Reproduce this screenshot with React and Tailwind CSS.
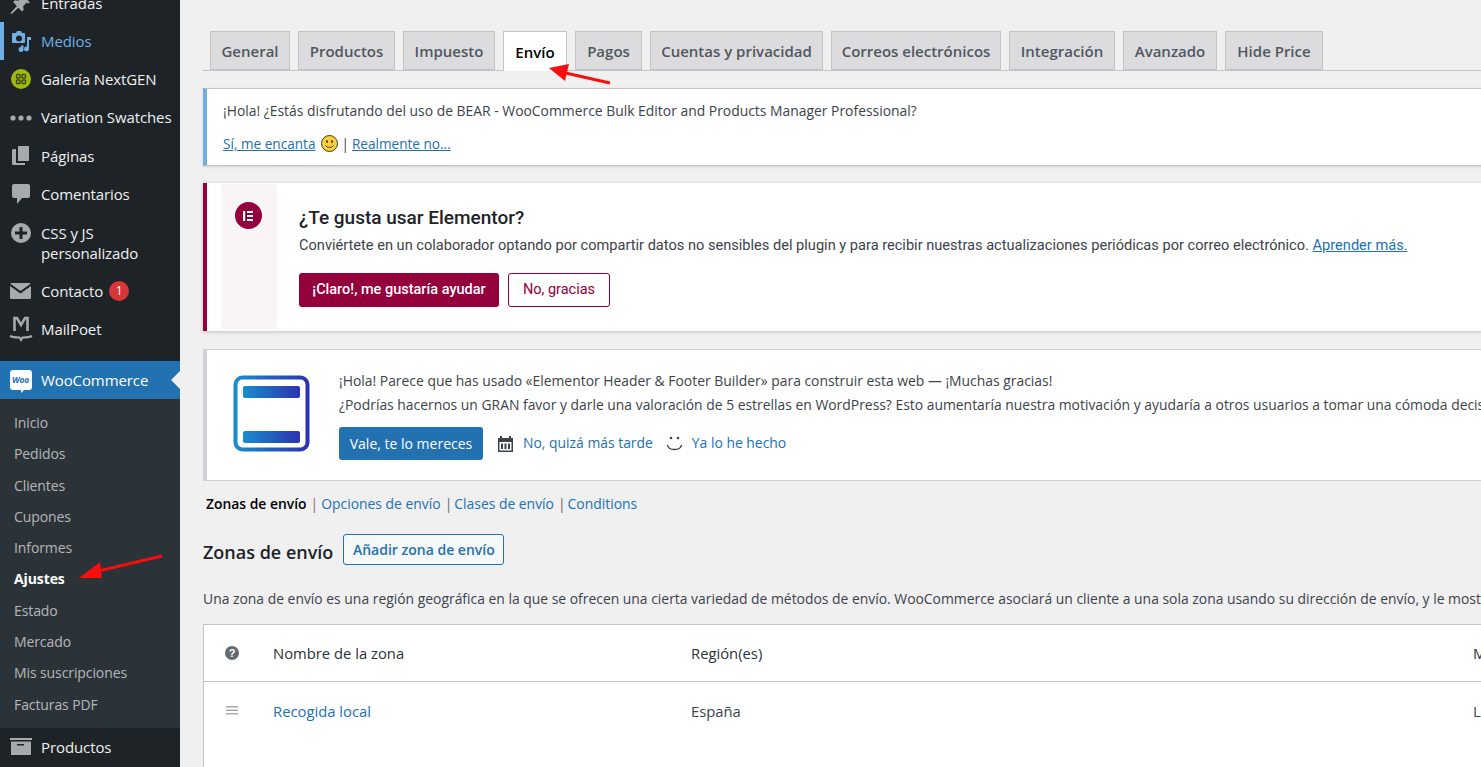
import React from 'react'

function PinIcon() {
    return (
        <svg width="21" height="21" viewBox="0 0 20 20" fill="#a7aaad">
            <path d="M11 1l8 8-2 1-1-1-3.500 3.500.5 3.500-1.500 1.500-3.500-3.500-6.500 6-1-1 6-6.500L3 8.500 4.500 7 8 7.500 11.500 4l-1-1z" />
        </svg>
    )
}

function MediaIcon() {
    return (
        <svg width="22" height="22" viewBox="0 0 22 22" fill="#72aee6">
            <path d="M3 3h3l1-2h4l1 2h2a1 1 0 0 1 1 1v8a1 1 0 0 1-1 1H3a1 1 0 0 1-1-1V4a1 1 0 0 1 1-1zm6 2.500a3 3 0 1 0 0 6 3 3 0 0 0 0-6z" fillRule="evenodd" />
            <path d="M17 7h4v3h-2v9a2.500 2.500 0 1 1-2-2.400zM11 15.500h2.500V19a2.500 2.500 0 1 1-2.500-2z" />
        </svg>
    )
}

function GalleryIcon() {
    return (
        <svg width="20" height="20" viewBox="0 0 20 20">
            <circle cx="10" cy="10" r="10" fill="#9fb80f" />
            <g fill="none" stroke="#3f4a0c" strokeWidth="1.400">
                <rect x="5.500" y="5.500" width="3.500" height="3.500" rx="0.800" />
                <rect x="11" y="5.500" width="3.500" height="3.500" rx="0.800" />
                <rect x="5.500" y="11" width="3.500" height="3.500" rx="0.800" />
                <rect x="11" y="11" width="3.500" height="3.500" rx="0.800" />
            </g>
        </svg>
    )
}

function DotsIcon() {
    return (
        <svg width="22" height="6" viewBox="0 0 22 6" fill="#a7aaad">
            <circle cx="3" cy="3" r="2.600" />
            <circle cx="11" cy="3" r="2.600" />
            <circle cx="19" cy="3" r="2.600" />
        </svg>
    )
}

function PagesIcon() {
    return (
        <svg width="18" height="20" viewBox="0 0 18 20" fill="#a7aaad">
            <path d="M6 0h11v15H6z" />
            <path d="M4 3v14h9v2H1.500A1.500 1.500 0 0 1 0 17.500V4.500A1.500 1.500 0 0 1 1.500 3z" />
        </svg>
    )
}

function CommentIcon() {
    return (
        <svg width="18" height="20" viewBox="0 0 18 20" fill="#a7aaad">
            <path d="M2 0h14a2 2 0 0 1 2 2v10a2 2 0 0 1-2 2H10l-5 6v-6H2a2 2 0 0 1-2-2V2a2 2 0 0 1 2-2z" />
        </svg>
    )
}

function PlusCircleIcon() {
    return (
        <svg width="20" height="20" viewBox="0 0 20 20" fill="#a7aaad">
            <path fillRule="evenodd" d="M10 0a10 10 0 1 1 0 20 10 10 0 0 1 0-20zM8.500 4v4.500H4v3h4.500V16h3v-4.500H16v-3h-4.500V4z" />
        </svg>
    )
}

function MailIcon() {
    return (
        <svg width="21" height="16" viewBox="0 0 21 16" fill="#a7aaad">
            <path d="M1.500 0h18c.6 0 1 .3 1.200.7L10.500 8 .3.700C.5.300.9 0 1.500 0z" />
            <path d="M0 3l10.500 7.500L21 3v11.500a1.500 1.500 0 0 1-1.500 1.500h-18A1.500 1.500 0 0 1 0 14.500z" />
        </svg>
    )
}

function MailPoetIcon() {
    return (
        <svg width="24" height="26" viewBox="0 0 24 26" fill="none" stroke="#a7aaad">
            <path d="M5.500 15V2h2.500l4 7 4-7h2.500v13" strokeWidth="2.600" />
            <path d="M1 20c3 1.500 7 1.500 9.500 1.500L12 24l1.500-2.500c2.500 0 6.500 0 9.500-1.500" strokeWidth="2" />
        </svg>
    )
}

function WooIcon() {
    return (
        <div className="relative flex h-[20px] w-[22px] items-center justify-center rounded-[3px] bg-white">
            <span className="text-[8.500px] font-bold italic leading-none tracking-tight text-[#2271b1]">Woo</span>
            <span className="absolute -bottom-[3px] left-[11px] h-0 w-0 border-r-[4px] border-t-[4px] border-r-transparent border-t-white" />
        </div>
    )
}

function ArchiveIcon() {
    return (
        <svg width="22" height="17" viewBox="0 0 22 17" fill="#a7aaad">
            <path d="M0 0h22v2H0z" />
            <path fillRule="evenodd" d="M1 3.500h20V17H1zM7 6v1.500h7V6z" />
        </svg>
    )
}

function SmileyIcon() {
    return (
        <svg width="17" height="17" viewBox="0 0 17 17">
            <circle cx="8.500" cy="8.500" r="8" fill="#fbcf3f" stroke="#4a3b10" strokeWidth="1" />
            <ellipse cx="6" cy="6.500" rx="1" ry="1.500" fill="#4a3b10" />
            <ellipse cx="11" cy="6.500" rx="1" ry="1.500" fill="#4a3b10" />
            <path d="M4.500 10.500c1.500 2.500 6.500 2.500 8 0" fill="none" stroke="#4a3b10" strokeWidth="1" />
        </svg>
    )
}

function Arrow({ className, width, height, x1, y1, x2, y2, head }) {
    return (
        <svg className={className} width={width} height={height} viewBox={`0 0 ${width} ${height}`}>
            <line x1={x1} y1={y1} x2={x2} y2={y2} stroke="#f50f0f" strokeWidth="3" />
            <polygon points={head} fill="#f50f0f" />
        </svg>
    )
}

const menuTop = [
    { label: 'Medios', icon: <MediaIcon />, active: true },
    { label: 'Galería NextGEN', icon: <GalleryIcon /> },
    { label: 'Variation Swatches', icon: <DotsIcon /> },
    { label: 'Páginas', icon: <PagesIcon /> },
    { label: 'Comentarios', icon: <CommentIcon /> },
]

const wooLinks = ['Inicio', 'Pedidos', 'Clientes', 'Cupones', 'Informes', 'Ajustes', 'Estado', 'Mercado', 'Mis suscripciones', 'Facturas PDF']

const tabs = [
    { label: 'General', w: 'w-[80px]' },
    { label: 'Productos', w: 'w-[97px]' },
    { label: 'Impuesto', w: 'w-[92px]' },
    { label: 'Envío', w: 'w-[64px]', active: true },
    { label: 'Pagos', w: 'w-[67px]' },
    { label: 'Cuentas y privacidad', w: 'w-[173px]' },
    { label: 'Correos electrónicos', w: 'w-[170px]' },
    { label: 'Integración', w: 'w-[106px]' },
    { label: 'Avanzado', w: 'w-[94px]' },
    { label: 'Hide Price', w: 'w-[98px]' },
]

function MenuItem({ label, icon, active }) {
    return (
        <div className={`flex h-[38.200px] items-center border-l-[4px] ${active ? 'border-[#72aee6] text-[#72aee6]' : 'border-transparent text-[#f0f0f1]'}`}>
            <div className="flex w-[37px] shrink-0 items-center justify-center pr-[4px]">{icon}</div>
            <span className="whitespace-nowrap text-[15px] tracking-[-0.100px]">{label}</span>
        </div>
    )
}

function Sidebar() {
    return (
        <aside className="h-full w-[180px] shrink-0 overflow-hidden bg-[#1d2327]">
            <div className="-mt-[16px]">
                <MenuItem label="Entradas" icon={<PinIcon />} />
                {menuTop.map((item) => (
                    <MenuItem key={item.label} {...item} />
                ))}
                <div className="mt-[1px] flex h-[58px] items-center border-l-[4px] border-transparent text-[#f0f0f1]">
                    <div className="flex w-[37px] shrink-0 items-center justify-center self-start pr-[4px] pt-[9px]">
                        <PlusCircleIcon />
                    </div>
                    <span className="text-[15px] leading-[20px] tracking-[-0.100px]">CSS y JS<br />personalizado</span>
                </div>
                <div className="flex h-[38px] items-center border-l-[4px] border-transparent text-[#f0f0f1]">
                    <div className="flex w-[37px] shrink-0 items-center justify-center pr-[4px]"><MailIcon /></div>
                    <span className="text-[15px] tracking-[-0.100px]">Contacto</span>
                    <span className="ml-[6px] flex h-[20px] w-[20px] items-center justify-center rounded-full bg-[#d63638] text-[12px] text-white">1</span>
                </div>
                <MenuItem label="MailPoet" icon={<MailPoetIcon />} />
                <div className="relative mt-[13px] flex h-[38px] items-center border-l-[4px] border-transparent bg-[#2271b1] text-white">
                    <div className="flex w-[37px] shrink-0 items-center justify-center pr-[4px]"><WooIcon /></div>
                    <span className="text-[15px] tracking-[-0.100px]">WooCommerce</span>
                    <span className="absolute right-0 top-[9.500px] h-0 w-0 border-y-[9px] border-r-[9px] border-y-transparent border-r-[#f0f0f1]" />
                </div>
                <div className="bg-[#2c3338] pb-[8px] pt-[7.500px]">
                    {wooLinks.map((link) => (
                        <div
                            key={link}
                            className={`flex h-[31.300px] items-center whitespace-nowrap pl-[14px] text-[14px] tracking-[-0.100px] ${link === 'Ajustes' ? 'font-bold text-white' : 'text-[#f0f0f1]/70'}`}
                        >
                            {link}
                        </div>
                    ))}
                </div>
                <MenuItem label="Productos" icon={<ArchiveIcon />} />
            </div>
        </aside>
    )
}

function TabBar() {
    return (
        <div className="flex h-[40px] gap-[8px] border-b border-[#c3c4c7] pl-[7px]">
            {tabs.map((tab) => (
                <div
                    key={tab.label}
                    className={`flex shrink-0 items-center justify-center border border-[#c3c4c7] pt-[2px] text-[15px] ${tab.w} ${tab.active ? 'h-[40px] border-b-0 bg-white font-semibold text-black' : 'h-[39px] bg-[#dcdcde] font-[550] text-[#50575e]'}`}
                >
                    {tab.label}
                </div>
            ))}
        </div>
    )
}

function BearNotice() {
    return (
        <div className="mt-[17px] h-[78px] border border-l-[4px] border-[#c3c4c7] border-l-[#72aee6] bg-white pl-[16px] pt-[11px] text-[13.900px] text-[#3c434a] shadow-sm">
            <p className="whitespace-nowrap leading-[21px]">¡Hola! ¿Estás disfrutando del uso de BEAR - WooCommerce Bulk Editor and Products Manager Professional?</p>
            <div className="mt-[12px] flex items-center text-[13.600px] leading-[21px]">
                <a className="text-[#2271b1] underline">Sí, me encanta</a>
                <span className="ml-[6px] flex items-center"><SmileyIcon /></span>
                <span className="ml-[3px] mr-[3px]">|</span>
                <a className="text-[#2271b1] underline">Realmente no...</a>
            </div>
        </div>
    )
}

function ElementorNotice() {
    return (
        <div className='mt-[17px] flex h-[148px] border-l-[4px] border-[#93003c] bg-white font-["Roboto",sans-serif] shadow-[0_1px_4px_rgba(0,0,0,0.2)]'>
            <div className="ml-[14px] mt-px flex h-[145px] w-[56px] shrink-0 justify-center bg-[#f9f4f6] pr-[2px] pt-[18px]">
                <div className="flex h-[27px] w-[27px] items-center justify-center rounded-full bg-[#93003c]">
                    <svg width="12" height="12" viewBox="0 0 12 12" fill="#fff">
                        <path d="M1 1h2.200v10H1zM5 1h6v2H5zM5 5h6v2H5zM5 9h6v2H5z" />
                    </svg>
                </div>
            </div>
            <div className="pl-[22px] pt-[23px]">
                <h3 className="whitespace-nowrap text-[19px] font-medium leading-[24px] text-[#1d2327]">¿Te gusta usar Elementor?</h3>
                <p className="mt-[5px] whitespace-nowrap text-[14.600px] leading-[20px] text-[#3c434a]">
                    Conviértete en un colaborador optando por compartir datos no sensibles del plugin y para recibir nuestras actualizaciones periódicas por correo electrónico.{' '}
                    <a className="text-[#2271b1] underline">Aprender más.</a>
                </p>
                <div className="mt-[18px] flex gap-[9px]">
                    <button className="h-[34px] w-[200px] rounded-[3px] bg-[#93003c] text-[14.500px] font-medium text-white">¡Claro!, me gustaría ayudar</button>
                    <button className="h-[34px] w-[102px] rounded-[3px] border border-[#93003c] bg-white text-[14.500px] text-[#93003c]">No, gracias</button>
                </div>
            </div>
        </div>
    )
}

function HeaderFooterNotice() {
    return (
        <div className="mt-[18px] flex h-[132px] border border-l-[4px] border-[#cfd0d2] bg-white pl-[26px] text-[13.900px] text-[#3c434a]">
            <svg className="mt-[25px] shrink-0" width="77" height="77" viewBox="0 0 77 77">
                <defs>
                    <linearGradient id="hfb" x1="0" y1="0" x2="1" y2="0">
                        <stop offset="0" stopColor="#1a8ccc" />
                        <stop offset="1" stopColor="#2b33b0" />
                    </linearGradient>
                </defs>
                <rect x="2.500" y="2.500" width="72" height="72" rx="7" fill="none" stroke="url(#hfb)" strokeWidth="4" />
                <rect x="10" y="11" width="57" height="12" rx="2" fill="url(#hfb)" />
                <rect x="10" y="56" width="57" height="12" rx="2" fill="url(#hfb)" />
            </svg>
            <div className="pl-[29px] pt-[19px]">
                <p className="whitespace-nowrap leading-[24px]">¡Hola! Parece que has usado «Elementor Header &amp; Footer Builder» para construir esta web — ¡Muchas gracias!</p>
                <p className="whitespace-nowrap leading-[24px]">¿Podrías hacernos un GRAN favor y darle una valoración de 5 estrellas en WordPress? Esto aumentaría nuestra motivación y ayudaría a otros usuarios a tomar una cómoda decisión al elegir</p>
                <div className="mt-[10px] flex items-center text-[#2271b1]">
                    <button className="h-[33px] w-[144px] rounded-[3px] bg-[#2271b1] text-[14px] text-white">Vale, te lo mereces</button>
                    <svg className="ml-[14px]" width="17" height="17" viewBox="0 0 17 17" fill="#3c434a">
                        <path fillRule="evenodd" d="M1 3h2V1h2v2h7V1h2v2h2v14H1zm1.500 4v8.500h12V7z" />
                        <path d="M4 8.500h2v5.500H4zM7.500 8.500h2v5.500h-2zM11 8.500h2v5.500h-2z" />
                    </svg>
                    <span className="ml-[9px]">No, quizá más tarde</span>
                    <svg className="ml-[13px]" width="17" height="17" viewBox="0 0 17 17" fill="none" stroke="#3c434a" strokeWidth="1.500">
                        <path d="M1.500 10c1 6 13 6 14 0" />
                        <circle cx="5" cy="3" r="1.300" fill="#3c434a" stroke="none" />
                        <circle cx="12" cy="3" r="1.300" fill="#3c434a" stroke="none" />
                    </svg>
                    <span className="ml-[9px]">Ya lo he hecho</span>
                </div>
            </div>
        </div>
    )
}

function ZonesTable() {
    return (
        <div className="mt-[15px] border border-b-0 border-r-0 border-[#c3c4c7] bg-white text-[14.800px]">
            <div className="flex h-[57px] items-center border-b border-[#c3c4c7] text-[#2c3338]">
                <div className="flex w-[69px] shrink-0 justify-center pr-[14px]">
                    <svg width="14" height="14" viewBox="0 0 14 14">
                        <circle cx="7" cy="7" r="7" fill="#646970" />
                        <text x="7" y="10.800" textAnchor="middle" fontSize="11" fontWeight="700" fill="#fff" fontFamily="Liberation Sans, sans-serif">?</text>
                    </svg>
                </div>
                <span className="w-[418px] shrink-0">Nombre de la zona</span>
                <span className="w-[782px] shrink-0">Región(es)</span>
                <span>Métodos</span>
            </div>
            <div className="flex h-[100px] items-start pt-[18px]">
                <div className="flex h-[21px] w-[69px] shrink-0 items-center justify-center pr-[14px]">
                    <svg width="12" height="9" viewBox="0 0 12 9" fill="#a7aaad">
                        <path d="M0 0h12v1.500H0zM0 3.500h12V5H0zM0 7h12v1.500H0z" />
                    </svg>
                </div>
                <a className="w-[418px] shrink-0 text-[#2271b1]">Recogida local</a>
                <span className="w-[782px] shrink-0 text-[#3c434a]">España</span>
                <span className="text-[#3c434a]">Local</span>
            </div>
        </div>
    )
}

function App() {
    return (
        <div className='relative flex h-[767px] w-[1481px] overflow-hidden bg-[#f0f0f1] font-["Open_Sans","Noto_Sans",sans-serif]'>
            <Sidebar />
            <main className="w-[1400px] shrink-0 pl-[23px] pt-[31px]">
                <TabBar />
                <BearNotice />
                <ElementorNotice />
                <HeaderFooterNotice />

                <div className="mt-[13px] flex items-center text-[13.900px] text-[#2271b1]">
                    <span className="ml-[3px] font-semibold text-black">Zonas de envío</span>
                    <span className="ml-[4px] text-[#8a6d5a]">|</span>
                    <a className="ml-[3px]">Opciones de envío</a>
                    <span className="ml-[4px] text-[#646970]">|</span>
                    <a className="ml-[2px]">Clases de envío</a>
                    <span className="ml-[4px] text-[#646970]">|</span>
                    <a className="ml-[2px]">Conditions</a>
                </div>

                <div className="mt-[24px] flex items-center">
                    <h2 className="text-[18px] font-semibold text-[#1d2327]">Zonas de envío</h2>
                    <button className="-mt-[5px] ml-[10px] h-[31px] w-[161px] rounded-[3px] border border-[#2271b1] bg-[#f6f7f7] text-[14px] font-[550] text-[#2271b1]">Añadir zona de envío</button>
                </div>

                <p className="mt-[22px] whitespace-nowrap text-[13.900px] leading-[21px] text-[#3c434a]">
                    Una zona de envío es una región geográfica en la que se ofrecen una cierta variedad de métodos de envío. WooCommerce asociará un cliente a una sola zona usando su dirección de envío, y le mostrará los métodos de envío de esa zona.
                </p>

                <ZonesTable />
            </main>

            <Arrow className="absolute left-[547px] top-[62px]" width={66} height={24} x1={63} y1={21} x2={14} y2={10} head="2,6 22,2 18,19" />
            <Arrow className="absolute left-[78px] top-[553px]" width={86} height={28} x1={84} y1={3} x2={16} y2={19} head="1,25 22,9 24,25" />
        </div>
    )
}

export default App
